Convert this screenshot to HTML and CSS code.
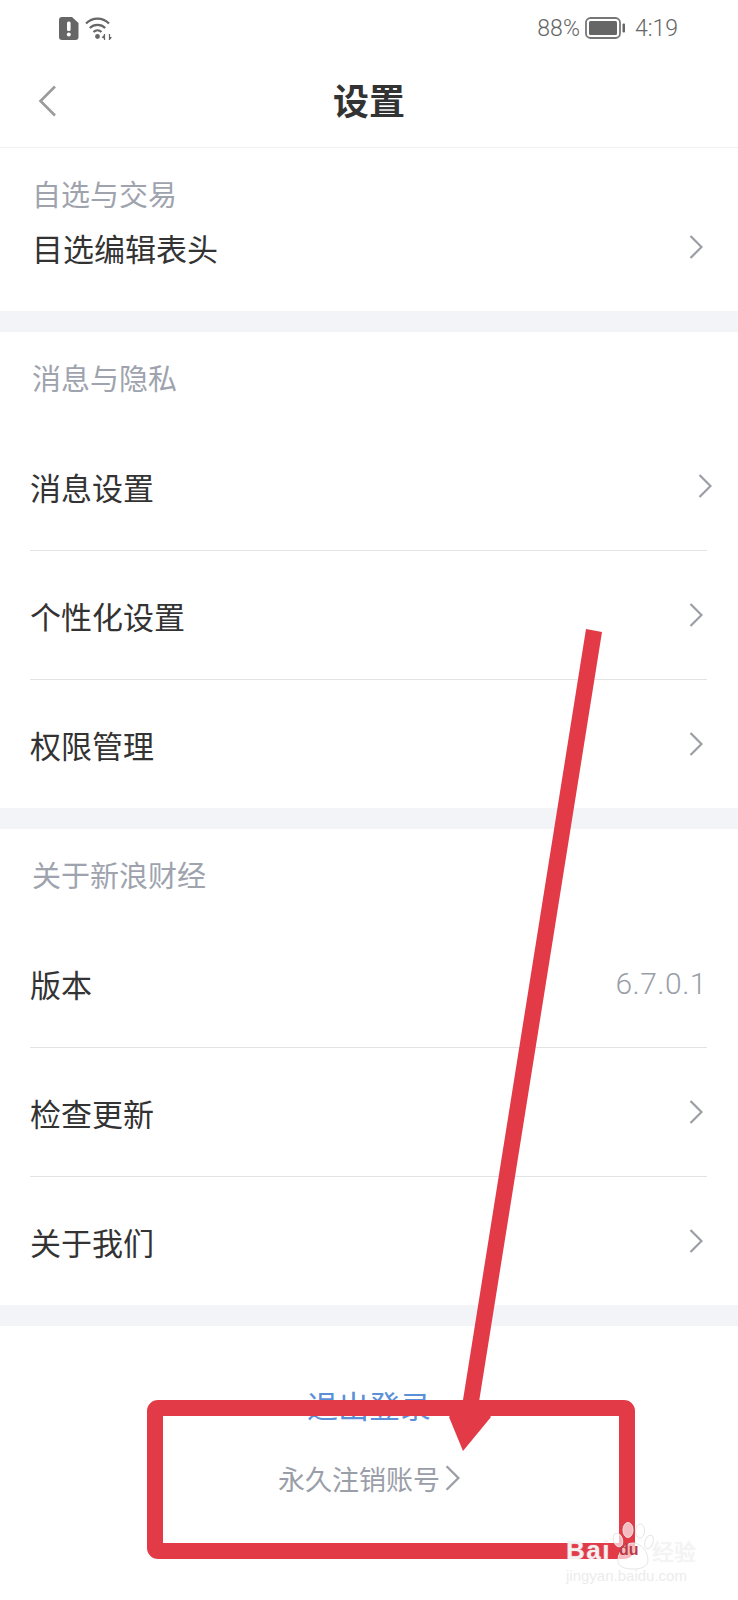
FILE: index.html
```html
<!DOCTYPE html>
<html lang="zh-CN">
<head>
    <meta charset="UTF-8">
    <meta name="viewport" content="width=device-width, initial-scale=1.0">
    <title>设置</title>
    <link rel="stylesheet" href="styles.css">
</head>
<body>

<div class="page">
    <div class="status-bar">
        <div class="status-left">
            <svg class="icon-alert" width="20" height="23" viewBox="0 0 20 23">
                <path d="M3 0H13L19.500 6V20a3 3 0 0 1-3 3H3a3 3 0 0 1-3-3V3a3 3 0 0 1 3-3Z" fill="#666"/>
                <rect x="8" y="4.500" width="3.600" height="9.500" rx="1.500" fill="#fff"/>
                <circle cx="9.800" cy="17.500" r="2" fill="#fff"/>
            </svg>
            <svg class="icon-wifi" width="27" height="23" viewBox="0 0 27 23">
                <path d="M1 6.500C7.500 0 17.500 0 24 6.500" fill="none" stroke="#666" stroke-width="2.200"/>
                <path d="M4.800 11C9 6.800 16 6.800 20.200 11" fill="none" stroke="#666" stroke-width="2.200"/>
                <path d="M8.500 15C10.800 12.800 14.200 12.800 16.500 15" fill="none" stroke="#666" stroke-width="2.200"/>
                <circle cx="12.500" cy="19.500" r="2.400" fill="#666"/>
                <path d="M19.500 17v6M24.500 17v6" stroke="#666" stroke-width="1.200"/>
                <path d="M16.500 20.500l2.500-2.500v3.500zM27 20.500l-2.500 2.500v-3.500z" fill="#666"/>
            </svg>
        </div>
        <div class="status-right">
            <span>88%</span>
            <svg class="icon-battery" width="41" height="22" viewBox="0 0 41 22">
                <rect x="1" y="1" width="34" height="20" rx="4.500" fill="none" stroke="#777" stroke-width="1.800"/>
                <rect x="4" y="4" width="28" height="14" rx="1.500" fill="#666"/>
                <rect x="37.500" y="6.500" width="2.500" height="9" rx="1" fill="#666"/>
            </svg>
            <span class="status-time">4:19</span>
        </div>
    </div>

    <div class="nav-bar">
        <svg class="nav-back" width="20" height="32" viewBox="0 0 20 32">
            <path d="M17 1.500L2.500 16L17 30.500" fill="none" stroke="#9b9b9b" stroke-width="2.600"/>
        </svg>
        <h1 class="nav-title">设置</h1>
    </div>

    <div class="section section-tight">
        <div class="section-title">自选与交易</div>
        <div class="row">
            <span>目选编辑表头</span>
            <svg class="chevron" width="14" height="24" viewBox="0 0 14 24"><path d="M1.500 1L12.500 12L1.500 23" fill="none" stroke="#9b9ea4" stroke-width="2.200"/></svg>
        </div>
    </div>

    <div class="section">
        <div class="section-title">消息与隐私</div>
        <div class="row">
            <span>消息设置</span>
            <svg class="chevron chevron-out" width="14" height="24" viewBox="0 0 14 24"><path d="M1.500 1L12.500 12L1.500 23" fill="none" stroke="#9b9ea4" stroke-width="2.200"/></svg>
        </div>
        <div class="row">
            <span>个性化设置</span>
            <svg class="chevron" width="14" height="24" viewBox="0 0 14 24"><path d="M1.500 1L12.500 12L1.500 23" fill="none" stroke="#9b9ea4" stroke-width="2.200"/></svg>
        </div>
        <div class="row">
            <span>权限管理</span>
            <svg class="chevron" width="14" height="24" viewBox="0 0 14 24"><path d="M1.500 1L12.500 12L1.500 23" fill="none" stroke="#9b9ea4" stroke-width="2.200"/></svg>
        </div>
    </div>

    <div class="section">
        <div class="section-title">关于新浪财经</div>
        <div class="row">
            <span>版本</span>
            <span class="row-value">6.7.0.1</span>
        </div>
        <div class="row">
            <span>检查更新</span>
            <svg class="chevron" width="14" height="24" viewBox="0 0 14 24"><path d="M1.500 1L12.500 12L1.500 23" fill="none" stroke="#9b9ea4" stroke-width="2.200"/></svg>
        </div>
        <div class="row">
            <span>关于我们</span>
            <svg class="chevron" width="14" height="24" viewBox="0 0 14 24"><path d="M1.500 1L12.500 12L1.500 23" fill="none" stroke="#9b9ea4" stroke-width="2.200"/></svg>
        </div>
    </div>

    <div class="account">
        <div class="logout">退出登录</div>
        <div class="cancel">
            <span>永久注销账号</span>
            <svg width="15" height="26" viewBox="0 0 14 24"><path d="M1.500 1L12.500 12L1.500 23" fill="none" stroke="#9b9ea4" stroke-width="2.200"/></svg>
        </div>
    </div>

    <!-- red markup drawn on top of the screenshot -->
    <svg class="markup" width="738" height="1600" viewBox="0 0 738 1600">
        <rect x="155" y="1408" width="472" height="143" rx="3" fill="none" stroke="#e33a48" stroke-width="16" stroke-linejoin="round"/>
        <path d="M586 629L602 632L479 1402L491 1417L463 1451L449 1417L463 1400Z" fill="#e33a48"/>
    </svg>

    <div class="watermark">
        <svg class="watermark-paw" width="42" height="48" viewBox="0 0 42 48">
            <g fill="#fff" fill-opacity="0.66" stroke="#e6e6e6" stroke-width="1">
                <ellipse cx="6" cy="18" rx="4.500" ry="7" transform="rotate(-18 6 18)"/>
                <ellipse cx="16" cy="8" rx="5" ry="7.500"/>
                <ellipse cx="28" cy="9" rx="4.500" ry="7"/>
                <ellipse cx="37" cy="20" rx="4" ry="7" transform="rotate(18 37 20)"/>
                <path d="M21 21C30 21 36 31 36 38C36 46 27 47 21 47C13 47 5 45 6 37C7 29 13 21 21 21Z"/>
            </g>
        </svg>
        <div class="watermark-brand">
            <span class="watermark-bai">Bai</span><span class="watermark-du">du</span><span class="watermark-cn">经验</span>
        </div>
        <div class="watermark-url">jingyan.baidu.com</div>
    </div>
</div>

</body>
</html>
```

FILE: styles.css
```css
html, body {
    margin: 0;
    padding: 0;
    background-color: #fff;
    font-family: "Noto Sans CJK SC", "Noto Sans", sans-serif;
}

.page {
    position: relative;
    width: 738px;
    height: 1600px;
    overflow: hidden;
    background-color: #f3f4f8;
}

.status-bar {
    height: 56px;
    padding: 0 60px 0 59px;
    display: flex;
    justify-content: space-between;
    align-items: center;
    background-color: #fff;
    color: #666;
    font-family: Roboto, sans-serif;
    font-weight: 300;
    font-size: 23px;
}

.status-left {
    display: flex;
    align-items: center;
    gap: 6px;
}

.status-right {
    display: flex;
    align-items: center;
    gap: 5px;
}

.status-time {
    margin-left: 4px;
}

.nav-bar {
    position: relative;
    height: 85px;
    padding-bottom: 6px;
    display: flex;
    justify-content: center;
    align-items: center;
    background-color: #fff;
    border-bottom: 1px solid #f1f1f1;
}

.nav-back {
    position: absolute;
    left: 38px;
    top: 29px;
}

.nav-title {
    margin: 0;
    font-size: 36px;
    font-weight: bold;
    color: #333;
}

.section {
    margin-bottom: 21px;
    padding: 0 31px 0 30px;
    background-color: #fff;
}

.section-title {
    padding: 25px 0 0 2px;
    margin-bottom: 25px;
    line-height: 40px;
    font-size: 29px;
    color: #9ea3ae;
}

.row {
    height: 40px;
    padding: 44px 0;
    display: flex;
    justify-content: space-between;
    align-items: center;
    border-bottom: 1px solid #e2e3e6;
    font-size: 31px;
    color: #333;
}

.row:last-child {
    border-bottom: none;
}

.section-tight .section-title {
    margin-bottom: 14px;
}

.section-tight .row {
    padding-top: 0;
    padding-left: 2px;
}

.chevron {
    margin-right: 4px;
}

.chevron-out {
    margin-right: -5px;
}

.row-value {
    color: #9a9ea8;
    font-family: Roboto, sans-serif;
    font-weight: 300;
    font-size: 30px;
    letter-spacing: 0.500px;
}

.account {
    height: 215px;
    padding-top: 59px;
    display: flex;
    flex-direction: column;
    align-items: center;
    background-color: #fff;
}

.logout {
    line-height: 40px;
    font-size: 31px;
    color: #5b8fd6;
}

.cancel {
    margin-top: 33px;
    height: 40px;
    display: flex;
    align-items: center;
    gap: 5px;
    font-size: 27px;
    color: #9a9ea8;
}

.markup {
    position: absolute;
    left: 0;
    top: 0;
}

.watermark {
    position: absolute;
    left: 566px;
    top: 1520px;
    width: 140px;
    font-family: "Liberation Sans", Arial, sans-serif;
    color: rgba(255, 255, 255, 0.66);
    text-shadow: 0 0 1px #dedede;
}

.watermark-paw {
    position: absolute;
    left: 46px;
    top: 2px;
}

.watermark-brand {
    position: relative;
    padding-top: 16px;
    display: flex;
    align-items: center;
    height: 28px;
}

.watermark-bai {
    width: 53px;
    font-size: 26px;
    font-weight: bold;
    letter-spacing: 1.500px;
}

.watermark-du {
    width: 33px;
    font-size: 16px;
    font-weight: bold;
    color: #b93a46;
    text-shadow: none;
}

.watermark-cn {
    font-family: "Noto Sans CJK SC", sans-serif;
    font-size: 22px;
}

.watermark-url {
    position: relative;
    margin-top: 3px;
    font-size: 15px;
    line-height: 18px;
    white-space: nowrap;
    color: #ececec;
    text-shadow: none;
}
```
